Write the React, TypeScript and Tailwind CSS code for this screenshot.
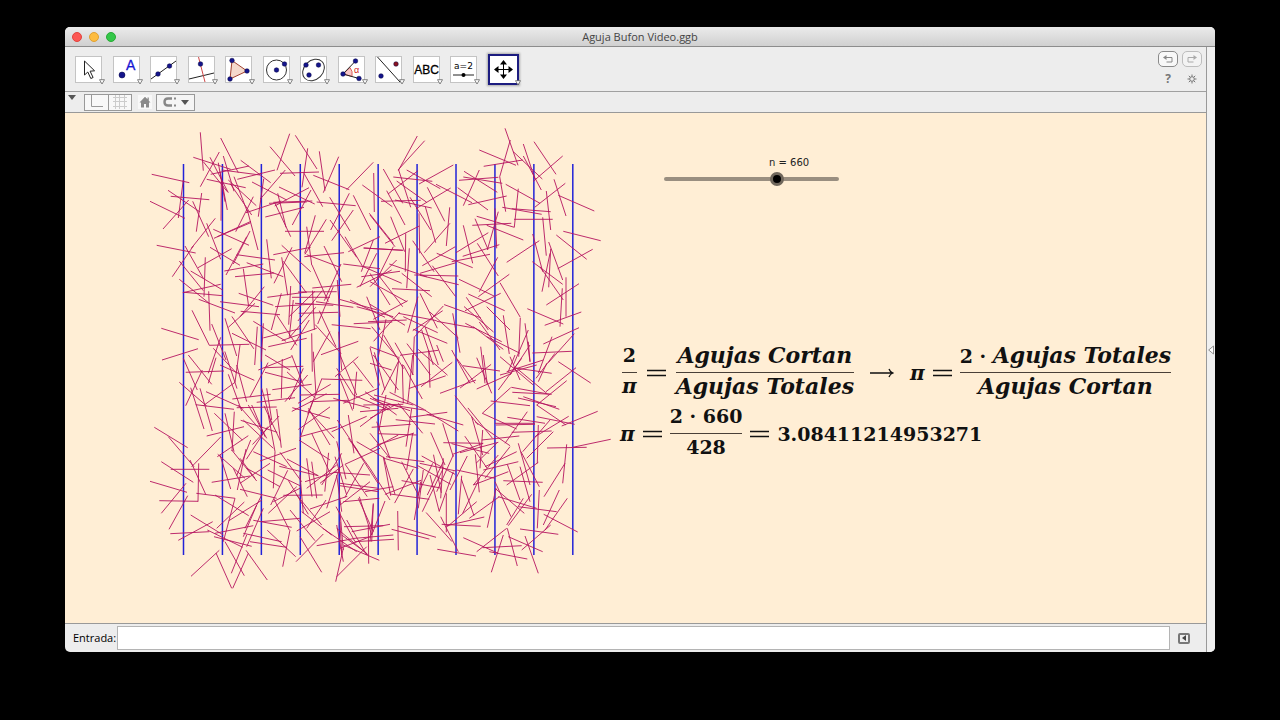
import { useState } from 'react';
import type { ReactNode } from 'react';

type Patch = { x: number; y: number; needles: string };

// Needles are stored as "x1,y1 x2,y2" per line, three units to a pixel, relative to the patch corner
const patches: Patch[] = [
    {
        x: 140,
        y: 120,
        needles: `35,163 148,188|181,37 190,152|160,112 272,148|238,96 181,200|242,54 295,158|210,112 265,218|250,108 282,214|302,121 392,188|212,163 327,138|200,178 317,203|235,128 255,245|30,244 135,295|92,229 208,239|84,211 180,276|130,180 115,294|146,240 69,327|185,219 169,335|158,244 206,350|244,187 243,302|390,80 465,168|449,41 411,151|466,46 531,147|503,85 486,202|420,160 537,156|405,150 292,178|436,150 361,237|538,94 555,212|596,110 550,218|520,166 628,209|700,127 620,209|667,195 757,260|701,159 703,276|640,226 692,330|628,220 572,330|569,232 630,333|640,270 575,362|492,160 548,260|336,186 440,240|417,201 524,252|507,203 404,258|513,210 457,315|371,176 355,290|400,247 517,243|387,250 500,246|530,246 647,257|376,291 492,262|318,278 424,243|435,334 552,334|526,286 494,400|559,298 495,403|405,250 452,350|413,220 438,322|340,230 287,335|282,170 323,278|265,180 349,257|322,270 354,390|333,304 222,355|332,308 232,350|226,295 154,385|200,310 242,418|220,328 327,376|50,376 167,399|174,443 275,386|135,378 190,475|160,378 97,470|118,423 190,512|196,412 192,530|152,453 248,510|118,478 209,551|128,518 242,493|132,517 248,527|206,514 210,632|176,538 285,579|240,545 357,560|253,453 370,432|285,470 402,459|290,404 405,420|330,333 280,432|380,358 394,475|320,428 430,470|456,382 402,490|400,404 512,382|425,376 512,455|430,424 499,518|425,412 443,526|493,410 612,398|500,404 600,442|552,378 605,485|603,432 553,542|517,504 634,493|516,435 565,545|474,516 590,515|456,532 570,532|465,550 580,556|452,498 446,614|382,532 500,516|310,446 326,560|373,500 300,590|302,574 420,584|424,520 394,630|265,622 345,550|255,595 290,708|156,571 208,676|64,625 176,659|208,676 328,673|66,720 174,686|340,604 438,664|276,640 378,690|215,612 258,720|242,652 205,760|527,562 446,655|530,625 425,662|508,600 452,690|500,655 385,680|525,514 447,590|538,572 588,680|580,500 533,612|476,580 595,577|575,614 692,626|598,538 712,570|596,635 605,750|655,664 543,704|610,432 720,446|650,502 755,450|641,611 757,606|570,635 520,725|515,640 517,755|370,610 364,725|352,620 344,735|220,685 290,760|630,540 735,592|672,384 790,391|615,350 668,440|720,350 625,395|700,360 664,455|688,280 760,370|190,125 262,215|270,190 335,285|245,150 360,165|570,300 650,412|500,320 515,435|210,382 300,436|320,350 258,465|240,155 262,270|405,560 520,552|296,520 400,556|410,585 470,676|460,540 448,650|592,480 600,590|528,545 640,562`,
    },
    {
        x: 370,
        y: 120,
        needles: `142,48 85,152|164,62 84,150|40,147 98,250|110,150 211,206|144,152 54,222|70,171 187,184|250,135 147,192|80,183 170,247|86,150 122,262|50,212 105,315|33,244 152,241|75,240 185,264|120,232 182,330|242,204 138,266|172,202 224,304|198,193 306,248|263,203 354,270|166,260 197,368|239,262 229,378|240,310 163,398|147,280 149,400|45,370 148,318|62,290 104,395|107,340 106,455|118,385 110,505|0,285 75,380|267,181 385,172|280,171 397,190|282,154 382,217|328,150 280,257|295,254 410,228|328,90 438,136|341,139 458,120|405,25 444,136|421,60 389,170|389,170 407,275|430,95 517,177|460,72 495,178|460,108 514,210|492,65 558,163|578,108 490,184|407,193 510,250|586,190 494,262|397,262 515,283|425,266 542,275|432,298 548,298|445,206 433,322|529,213 542,330|552,178 588,288|565,226 673,273|580,334 692,362|559,345 650,418|668,388 563,446|488,342 518,455|487,425 578,493|508,362 410,427|518,292 529,407|542,386 536,502|540,400 516,515|536,366 578,480|510,440 580,540|627,491 529,555|588,472 588,590|577,505 570,620|472,566 580,612|634,576 524,616|627,623 520,672|613,641 535,728|487,699 605,694|307,316 424,310|320,289 433,322|315,296 354,388|385,275 352,390|350,316 460,360|375,265 380,385|280,316 308,430|355,338 258,398|388,374 278,409|360,403 245,425|322,370 385,468|383,412 328,515|200,400 308,443|150,460 258,428|133,465 265,468|150,466 266,494|128,362 192,455|256,380 157,437|187,437 257,530|58,432 170,470|95,460 185,530|66,506 180,512|150,520 202,625|144,530 113,638|220,558 134,650|267,478 372,528|418,463 325,530|295,522 404,572|392,520 285,572|289,532 355,630|390,488 451,592|451,594 446,710|400,586 418,702|286,610 395,665|200,604 312,624|248,580 270,698|328,606 390,690|475,630 430,735|465,610 480,725|332,680 345,790|130,628 232,670|100,590 203,638|218,572 128,632|165,620 205,735|245,690 300,790|75,668 130,765|90,706 205,691|133,650 128,765|0,553 105,616|-6,605 110,600|10,598 113,542|-26,470 90,454|-20,384 98,391|25,465 98,560|70,380 20,480|0,500 80,420|5,620 80,710|48,598 25,710|546,650 505,760|350,560 420,630|310,620 400,688|350,650 450,700|-20,440 95,490|0,485 110,545|0,460 60,555|20,400 -30,500|-10,530 30,630|0,680 85,712|-40,560 70,590|85,580 200,602|155,630 190,735`,
    },
    {
        x: 140,
        y: 355,
        needles: `43,217 143,278|64,320 160,382|92,343 208,343|30,379 141,412|58,437 174,439|176,325 174,440|150,315 197,418|85,245 162,335|242,246 155,335|138,385 64,475|143,422 87,523|152,480 250,540|218,500 115,556|91,536 208,530|169,415 285,430|215,382 330,363|153,664 238,586|228,594 275,700|325,595 278,700|318,586 382,675|255,560 313,662|320,540 274,655|222,545 335,574|202,525 308,577|225,535 340,512|313,441 230,520|285,430 250,560|225,420 326,482|240,300 272,402|233,298 315,370|332,255 290,362|325,242 232,305|200,243 312,215|223,175 307,255|283,170 276,288|302,196 412,232|410,162 424,278|255,175 282,290|118,82 200,153|152,98 192,222|198,110 310,160|167,149 282,163|180,100 217,228|285,82 190,152|137,52 252,48|265,58 305,168|130,10 172,105|187,45 137,152|145,0 215,88|205,85 228,8|240,30 343,76|285,82 300,-30|377,38 490,34|375,52 485,80|427,12 424,130|397,104 515,88|277,132 392,118|290,158 410,156|350,142 465,128|365,100 395,210|503,60 435,140|490,40 448,135|547,72 667,76|546,70 503,178|480,120 600,118|510,140 625,136|474,145 572,88|457,158 570,190|505,165 583,250|515,235 568,350|592,215 480,245|477,255 570,315|518,140 480,250|505,160 570,270|592,195 655,290|625,180 642,295|680,184 575,230|650,50 640,162|420,292 485,380|468,280 360,318|385,180 405,290|405,290 400,400|340,290 440,335|390,325 300,385|418,334 535,362|441,312 535,362|383,345 480,392|443,346 392,450|445,376 505,478|448,525 402,432|300,403 410,430|430,421 548,420|510,462 622,424|500,310 516,425|590,330 500,400|605,295 545,390|580,352 690,360|585,305 620,420|598,340 560,460|570,470 470,528|558,435 500,520|485,470 575,540|450,465 525,557|370,460 320,575|365,420 315,520|340,496 455,517|382,526 467,605|310,535 425,560|330,560 440,577|450,525 428,635|550,537 468,620|480,545 545,652|530,572 645,550|645,550 760,540|600,500 605,600|590,510 610,620|610,580 587,680|680,575 590,665|548,520 650,590|590,520 685,600|620,495 680,600|655,430 700,530|658,425 695,540|700,448 690,560|588,455 645,560|600,385 715,400|600,392 715,410|610,440 718,430|690,380 600,450|625,250 690,340|640,270 714,385|720,280 615,328|612,515 730,512|685,510 686,626|600,580 690,545|300,310 345,370|275,285 350,378|320,340 420,395|318,282 292,405|280,340 322,425|295,150 370,235|325,150 380,250|335,150 375,245|310,195 400,280|380,100 395,195|355,45 455,5|375,0 450,45|455,0 490,90|520,-10 528,120|590,40 640,120|600,0 650,120|640,20 700,98|585,65 655,5|640,120 745,165|580,130 690,160|610,145 715,100|675,110 770,180|660,215 740,155|385,475 470,395|480,360 490,475|495,380 590,350|540,385 610,330|515,320 530,430|590,360 605,470|310,545 350,450|600,470 610,585|605,540 680,595|480,400 400,440|470,420 545,510|290,30 320,140`,
    },
    {
        x: 370,
        y: 355,
        needles: `565,20 662,84|618,38 528,110|590,77 500,150|500,150 588,210|683,169 575,213|722,253 608,277|531,279 650,277|590,268 578,385|585,325 522,425|592,430 525,525|521,478 623,531|568,405 520,510|508,405 502,520|450,522 565,538|410,520 320,590|412,520 442,633|400,540 364,652|465,543 505,655|280,548 385,595|358,590 472,612|338,578 455,572|415,545 518,590|542,510 455,585|202,583 318,603|212,485 265,590|215,508 332,514|230,512 343,486|229,415 229,532|320,440 232,515|275,362 265,478|274,372 312,482|388,425 298,490|378,400 352,518|375,380 423,485|385,425 500,460|445,455 560,470|375,400 463,475|505,322 410,390|400,377 518,382|412,328 450,435|453,290 508,395|485,418 415,512|460,430 410,510|450,335 480,440|445,320 340,345|385,262 270,293|448,243 335,255|220,263 338,265|305,185 338,300|255,122 325,210|315,200 420,272|420,275 345,370|378,210 495,208|412,187 525,205|472,170 405,265|362,138 480,152|422,98 337,175|337,175 440,222|424,97 540,118|427,112 545,118|444,129 558,155|460,125 568,163|247,22 153,95|210,115 318,75|320,102 425,55|278,32 390,48|260,10 315,85|320,8 365,115|340,0 352,88|430,38 545,55|440,40 530,115|555,-5 498,70|520,15 410,50|455,10 385,105|390,5 490,90|176,-15 180,98|100,30 157,132|97,28 100,145|87,5 75,115|128,0 113,145|125,160 108,275|85,145 158,235|77,194 195,207|12,120 130,150|50,148 168,166|165,166 265,228|170,178 280,210|118,187 232,172|5,217 122,208|24,236 140,240|132,234 20,270|128,235 110,345|182,232 225,330|218,205 250,305|250,350 208,468|292,303 240,405|155,303 255,358|149,325 258,348|48,305 163,320|42,310 145,340|95,320 145,420|42,310 75,418|40,305 62,422|60,417 178,433|152,380 133,495|220,310 212,430|220,320 172,420|220,340 157,470|180,360 208,470|83,468 85,586|84,514 198,547|45,438 5,540|-80,570 28,616|-45,560 72,553|-55,530 60,508|10,445 5,560|20,200 60,310|48,120 25,235|316,298 328,412|385,300 310,390|380,265 318,325|260,345 375,370|445,265 480,390|540,195 458,290|505,210 502,325|550,230 470,310|596,184 495,245|500,185 614,208|375,205 495,205|425,232 545,228|250,300 200,410|188,325 140,425|160,345 145,460|248,298 340,265|338,225 330,340|345,335 440,290|310,390 415,350|420,60 480,-30|435,0 415,50|500,30 390,60|450,75 420,5|530,25 505,80|475,-40 480,20|200,-30 220,20|0,25 65,45|10,0 85,105|85,20 35,120|0,130 60,155|-30,170 85,160|0,190 75,150|0,235 60,310|0,285 85,240|0,340 60,435|-15,410 70,395|-40,260 45,310|-20,150 100,148`,
    },
];

const TOTAL = 660;

const parse = (needles: string) =>
    needles.split('|').map((pair) => pair.split(' ').map((p) => p.split(',').map(Number)));

const listed = patches.flatMap(({ x, y, needles }) =>
    parse(needles).map(([[x1, y1], [x2, y2]]) => [x + x1 / 3, y + y1 / 3, x + x2 / 3, y + y2 / 3]),
);

// Deterministic spread for the rest of the throws, so the picture stays put between renders
const scatter = (count: number) => {
    let seed = 428;
    const rand = () => {
        seed = (seed * 16807) % 2147483647;
        return seed / 2147483647;
    };
    return Array.from({ length: Math.max(0, count) }, () => {
        const cx = 230 + rand() * 265;
        const cy = 300 + rand() * 235;
        const a = rand() * Math.PI;
        const dx = Math.cos(a) * 19.5;
        const dy = Math.sin(a) * 19.5;
        return [cx - dx, cy - dy, cx + dx, cy + dy];
    });
};

const throws = [...listed, ...scatter(Math.min(60, TOTAL - listed.length))];
const needlePath = throws.map(([a, b, c, d]) => `M${a.toFixed(1)} ${b.toFixed(1)}L${c.toFixed(1)} ${d.toFixed(1)}`).join('');
const ruledLines = Array.from({ length: 11 }, (_, i) => 183.5 + i * 38.93);

const Dot = ({ x, y, r = 2.3, fill = '#14148c' }: { x: number; y: number; r?: number; fill?: string }) => (
    <circle cx={x} cy={y} r={r} fill={fill} stroke="#000040" strokeWidth={0.5} />
);

const tools: { name: string; icon: ReactNode }[] = [
    { name: 'Elige y mueve', icon: <path d="M9.500 5v14l3.300-3 3 6.500 2.300-1-3-6.300 4.500-.4z" fill="#fff" stroke="#222" /> },
    {
        name: 'Punto',
        icon: (
            <>
                <Dot x={9} y={19} r={3} />
                <text x={13} y={14} fontSize={14} fill="#1414d2" stroke="#1414d2" strokeWidth={0.300} fontFamily="Liberation Sans, sans-serif">A</text>
            </>
        ),
    },
    {
        name: 'Recta',
        icon: (
            <>
                <path d="M1 23L26 5" stroke="#222" />
                <Dot x={8} y={18} />
                <Dot x={19.500} y={10} />
            </>
        ),
    },
    {
        name: 'Perpendicular',
        icon: (
            <>
                <path d="M1 23L26 17" stroke="#222" />
                <path d="M10.500 1L17 26" stroke="#d04848" />
                <Dot x={12.500} y={8} />
            </>
        ),
    },
    {
        name: 'Polígono',
        icon: (
            <>
                <path d="M7 4.500L22 15 5 23z" fill="#f4d9cc" stroke="#a04030" />
                <Dot x={7} y={4.500} />
                <Dot x={22} y={15} />
                <Dot x={5} y={23} />
            </>
        ),
    },
    {
        name: 'Circunferencia',
        icon: (
            <>
                <circle cx={13.500} cy={14} r={10} fill="none" stroke="#333" />
                <Dot x={13.500} y={14} />
                <Dot x={21.500} y={8} />
            </>
        ),
    },
    {
        name: 'Elipse',
        icon: (
            <>
                <ellipse cx={13.500} cy={14} rx={12} ry={9.500} transform="rotate(-45 13.500 14)" fill="none" stroke="#333" />
                <Dot x={6} y={9} />
                <Dot x={18.500} y={9} />
                <Dot x={9} y={19} />
            </>
        ),
    },
    {
        name: 'Ángulo',
        icon: (
            <>
                <path d="M5 18L12 11.500Q15 15 14 20.500z" fill="#f8c8c8" stroke="#d04040" strokeWidth={0.800} />
                <path d="M17.500 5L5 18L21 22.500" fill="none" stroke="#222" />
                <text x={16} y={17} fontSize={9} fill="#d02020" fontFamily="Liberation Sans, sans-serif">α</text>
                <Dot x={17.500} y={5} />
                <Dot x={5} y={18} />
                <Dot x={21} y={22.500} />
            </>
        ),
    },
    {
        name: 'Simetría axial',
        icon: (
            <>
                <path d="M2.500 1L25 26" stroke="#222" />
                <Dot x={21} y={8} fill="#8c1420" />
                <Dot x={6} y={20} />
            </>
        ),
    },
    {
        name: 'Texto',
        icon: <text x={13.500} y={18} textAnchor="middle" fontSize={12} fill="#000" stroke="#000" strokeWidth={0.300} fontFamily="Liberation Sans, sans-serif">ABC</text>,
    },
    {
        name: 'Deslizador',
        icon: (
            <>
                <text x={13.500} y={13} textAnchor="middle" fontSize={9} fill="#000" fontFamily="DejaVu Sans, sans-serif">a=2</text>
                <path d="M3 19H24" stroke="#222" />
                <circle cx={13.500} cy={19} r={2} fill="#000" />
            </>
        ),
    },
    {
        name: 'Desplaza vista gráfica',
        icon: (
            <>
                <path d="M6 13.500H21M13.500 6V21" stroke="#000" />
                <path d="M13.500 4l3.500 4.500h-7zM13.500 23l3.500-4.500h-7zM4 13.500l4.500-3.500v7zM23 13.500l-4.500-3.500v7z" fill="#000" />
            </>
        ),
    },
];

const ToolButton = ({ name, icon, active, onClick }: { name: string; icon: ReactNode; active: boolean; onClick: () => void }) => (
    <button
        type="button"
        aria-label={name}
        onClick={onClick}
        className={`relative flex shrink-0 items-center justify-center bg-white ${active
            ? 'size-[31px] border-2 border-[#1c1c80] shadow-[0_0_2px_1px_#aaa]'
            : 'size-[27px] border border-[#c4c4c4]'
            }`}
    >
        <svg viewBox="0 0 27 27" className="size-[27px] shrink-0">{icon}</svg>
        <svg viewBox="0 0 6 6" className="absolute -right-1 -bottom-[3px] size-1.5">
            <path d="M.5.7h5L3 5z" fill="#fff" stroke="#666" strokeWidth={0.8} />
        </svg>
    </button>
);

const Fraction = ({ top, bottom }: { top: ReactNode; bottom: ReactNode }) => (
    <div className="flex flex-col text-center">
        <div className="h-[30px]">{top}</div>
        <div className="h-px bg-[#4a4038]" />
        <div className="h-[30px]">{bottom}</div>
    </div>
);

const Words = ({ children }: { children: ReactNode }) => <span className="text-[22px] italic">{children}</span>;
const Pi = () => <span className="text-[20px] italic">π</span>;
const Equals = () => (
    <svg viewBox="0 0 19 8" className="h-2 w-[19px] shrink-0">
        <path d="M0 1.500H19M0 6.500H19" stroke="#111" strokeWidth={1.5} />
    </svg>
);

const App = () => {
    const [n, setN] = useState(660);
    const [tool, setTool] = useState(tools.length - 1);
    const [entry, setEntry] = useState('');

    return (
        <div className="flex h-screen flex-col bg-black px-[65px] pt-[27px] pb-[68px] font-['Open_Sans',sans-serif] text-[#222]">
            <div className="flex min-h-0 flex-1 flex-col overflow-hidden rounded-[5px] bg-[#ededed]">
                <header className="relative flex h-5 shrink-0 items-center justify-center border-b border-[#8c8c8c] bg-linear-to-b from-[#ebebeb] to-[#d0d0d0]">
                    <div className="absolute left-[7px] flex gap-[7px]">
                        <button type="button" aria-label="Cerrar" className="size-2.5 rounded-full border border-[#e0443e] bg-[#fc5753]" />
                        <button type="button" aria-label="Minimizar" className="size-2.5 rounded-full border border-[#dea034] bg-[#fdbc40]" />
                        <button type="button" aria-label="Ampliar" className="size-2.5 rounded-full border border-[#27aa35] bg-[#34c749]" />
                    </div>
                    <h1 className="pt-px text-[11px] text-[#444]">Aguja Bufon Video.ggb</h1>
                </header>

                <div className="flex min-h-0 flex-1">
                    <div className="flex min-w-0 flex-1 flex-col">
                        <div className="flex h-[45px] shrink-0 items-center justify-between border-b border-[#a0a0a0] pr-1 pl-2.5">
                            <div className="flex w-[444px] items-center justify-between">
                                {tools.map((t, i) => (
                                    <ToolButton key={t.name} {...t} active={i === tool} onClick={() => setTool(i)} />
                                ))}
                            </div>
                            <div className="grid grid-cols-2 gap-x-1 gap-y-1">
                                <button type="button" aria-label="Deshacer" className="flex h-4 w-5 items-center justify-center rounded-[5px] border border-[#8a8a8a] bg-[#f8f8f8]">
                                    <svg viewBox="0 0 10 8" className="h-2 w-2.5">
                                        <path d="M3 2.500H9V7H3.500" fill="none" stroke="#888" />
                                        <path d="M0 2.500L3.500 0V5z" fill="#888" />
                                    </svg>
                                </button>
                                <button type="button" aria-label="Rehacer" className="flex h-4 w-5 items-center justify-center rounded-[5px] border border-[#bdbdbd] bg-[#f3f3f3]">
                                    <svg viewBox="0 0 10 8" className="h-2 w-2.5">
                                        <path d="M7 2.500H1V7H6.500" fill="none" stroke="#aaa" />
                                        <path d="M10 2.500L6.500 0V5z" fill="#aaa" />
                                    </svg>
                                </button>
                                <button type="button" aria-label="Ayuda" className="h-4 w-5 text-center text-[12px] leading-4 font-bold text-[#777]">?</button>
                                <button type="button" aria-label="Preferencias" className="flex h-4 w-5 items-center justify-center">
                                    <svg viewBox="0 0 10 10" className="size-2.5" fill="none" stroke="#777">
                                        <circle cx={5} cy={5} r={2.300} />
                                        <path d="M5 .5V2.500M5 7.500V9.500M.5 5H2.500M7.500 5H9.500M1.800 1.800L3.200 3.200M6.800 6.800L8.200 8.200M8.200 1.800L6.800 3.200M3.200 6.800L1.800 8.200" />
                                    </svg>
                                </button>
                            </div>
                        </div>

                        <div className="flex h-[21px] shrink-0 items-center border-b border-[#999] pl-[3px]">
                            <svg viewBox="0 0 8 5" className="mb-2.5 h-[5px] w-2"><path d="M0 0H8L4 5z" fill="#555" /></svg>
                            <div className="ml-2 flex h-[17px] w-12 border border-[#999] bg-[#f8f8f8]">
                                <button type="button" aria-label="Ejes" className="flex flex-1 items-center justify-center border-r border-[#999]">
                                    <svg viewBox="0 0 14 14" className="size-3.5"><path d="M2.500 0V11.500H14" fill="none" stroke="#999" /></svg>
                                </button>
                                <button type="button" aria-label="Cuadrícula" className="flex flex-1 items-center justify-center">
                                    <svg viewBox="0 0 14 14" className="size-3.5"><path d="M2.500 0V14M6.500 0V14M11.500 0V14M0 2.500H14M0 6.500H14M0 11.500H14" stroke="#ccc" /></svg>
                                </button>
                            </div>
                            <button type="button" aria-label="Vista estándar" className="ml-1.5 flex size-3.5 items-center justify-center bg-[#f8f8f8]">
                                <svg viewBox="0 0 12 12" className="size-3"><path d="M6 .8L.5 6.500H2V11.500H5V8H7V11.500H10V6.500H11.500L9.800 4.700V1.500H8.500V3.300z" fill="#8a8a8a" /></svg>
                            </button>
                            <button type="button" aria-label="Captura de punto" className="ml-1 flex h-[17px] w-[39px] items-center justify-center gap-1 border border-[#999] bg-[#f5f5f5]">
                                <svg viewBox="0 0 14 10" className="h-2.5 w-3.5">
                                    <path d="M9 1.500H5Q1.500 1.500 1.500 5T5 8.500H9" fill="none" stroke="#888" strokeWidth={2.400} />
                                    <path d="M11 1.500H13M11 8.500H13" stroke="#888" strokeWidth={2} />
                                </svg>
                                <svg viewBox="0 0 8 5" className="h-[5px] w-2"><path d="M0 0H8L4 5z" fill="#555" /></svg>
                            </button>
                        </div>

                        <main className="flex min-h-0 flex-1 overflow-hidden bg-[#ffeed5]">
                            <svg viewBox="65 113 547 510" className="h-[510px] w-[547px] shrink-0" role="img" aria-label="Agujas de Buffon">
                                {ruledLines.map((x) => (
                                    <path key={x} d={`M${x} 164V555`} stroke="#2222d8" strokeWidth={1.500} />
                                ))}
                                <path d={needlePath} stroke="#b51460" strokeWidth={0.900} fill="none" />
                            </svg>

                            <div className="flex flex-col items-start pt-[42px] pl-2">
                                <div className="ml-11 flex w-[175px] flex-col font-['DejaVu_Sans',sans-serif]">
                                    <label htmlFor="throws" className="h-4 pl-[105px] text-[10px] leading-4 whitespace-nowrap">n = {n}</label>
                                    <input
                                        id="throws"
                                        type="range"
                                        min={0}
                                        max={1000}
                                        value={n}
                                        onChange={(e) => setN(Number(e.target.value))}
                                        className="h-4 w-full appearance-none bg-transparent [&::-webkit-slider-runnable-track]:h-1 [&::-webkit-slider-runnable-track]:rounded-full [&::-webkit-slider-runnable-track]:bg-[#998e80] [&::-webkit-slider-thumb]:-mt-[5px] [&::-webkit-slider-thumb]:size-3.5 [&::-webkit-slider-thumb]:appearance-none [&::-webkit-slider-thumb]:rounded-full [&::-webkit-slider-thumb]:border-[3px] [&::-webkit-slider-thumb]:border-[#70675c] [&::-webkit-slider-thumb]:bg-black"
                                    />
                                </div>

                                <section className="mt-[155px] flex flex-col font-['DejaVu_Serif',serif] text-[19px] leading-[26px] font-bold whitespace-nowrap text-[#111]">
                                    <div className="flex items-center gap-2.5 pl-0.5">
                                        <Fraction top="2" bottom={<Pi />} />
                                        <Equals />
                                        <Fraction top={<Words>Agujas Cortan</Words>} bottom={<Words>Agujas Totales</Words>} />
                                        <svg viewBox="0 0 24 10" className="mx-1.5 h-2.5 w-6 shrink-0">
                                            <path d="M0 5H23M19 1Q20 4 23 5Q20 6 19 9" fill="none" stroke="#111" strokeWidth={1.300} />
                                        </svg>
                                        <div className="flex items-center gap-2">
                                            <Pi />
                                            <Equals />
                                            <Fraction top={<>2 · <Words>Agujas Totales</Words></>} bottom={<Words>Agujas Cortan</Words>} />
                                        </div>
                                    </div>
                                    <div className="flex items-center gap-2">
                                        <Pi />
                                        <Equals />
                                        <Fraction top={`2 · ${n}`} bottom="428" />
                                        <Equals />
                                        <span>{n === 660 ? '3.08411214953271' : ((2 * n) / 428).toFixed(14)}</span>
                                    </div>
                                </section>
                            </div>
                        </main>

                        <footer className="flex h-[29px] shrink-0 items-center border-t border-[#999] pr-4 pl-2">
                            <label htmlFor="entry" className="w-11 text-[11px] text-black">Entrada:</label>
                            <input
                                id="entry"
                                type="text"
                                value={entry}
                                onChange={(e) => setEntry(e.target.value)}
                                className="h-6 min-w-0 flex-1 border border-[#b4b4b4] bg-white px-1 text-[12px] outline-none"
                            />
                            <button type="button" aria-label="Ayuda de entrada" className="ml-2 flex h-[11px] w-3 items-center justify-center rounded-[2px] border-2 border-[#777]">
                                <svg viewBox="0 0 4 6" className="h-1.5 w-1"><path d="M4 0V6L0 3z" fill="#444" /></svg>
                            </button>
                        </footer>
                    </div>

                    <aside className="flex w-[9px] shrink-0 items-center justify-center border-l border-[#999] bg-[#f0f0f0]">
                        <button type="button" aria-label="Mostrar panel">
                            <svg viewBox="0 0 6 10" className="h-2.5 w-1.5"><path d="M5.500 1V9L.7 5z" fill="#fff" stroke="#777" strokeWidth={0.800} /></svg>
                        </button>
                    </aside>
                </div>
            </div>
        </div>
    );
};

export default App;
